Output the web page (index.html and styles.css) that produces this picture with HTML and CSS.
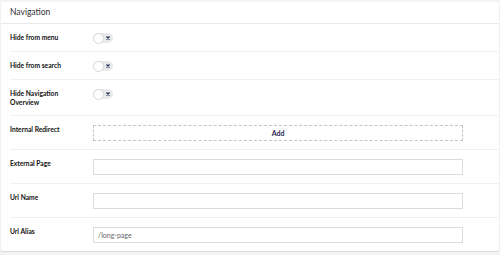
FILE: index.html
```html
<!DOCTYPE html>
<html>
  <head>
    <meta charset="utf-8">
    <title>Navigation</title>
    <link rel="stylesheet" href="styles.css">
  </head>
  <body>
    <div class="panel">
      <div class="panel-header">Navigation</div>

      <div class="row">
        <div class="label">Hide from menu</div>
        <div class="control">
          <span class="toggle"><span class="knob"></span>
            <svg class="cross" viewBox="0 0 4 4"><path d="M0.5 0.5 L3.5 3.5 M3.5 0.5 L0.5 3.5"/></svg>
          </span>
        </div>
      </div>

      <div class="row">
        <div class="label">Hide from search</div>
        <div class="control">
          <span class="toggle"><span class="knob"></span>
            <svg class="cross" viewBox="0 0 4 4"><path d="M0.5 0.5 L3.5 3.5 M3.5 0.5 L0.5 3.5"/></svg>
          </span>
        </div>
      </div>

      <div class="row">
        <div class="label">Hide Navigation<br>Overview</div>
        <div class="control">
          <span class="toggle"><span class="knob"></span>
            <svg class="cross" viewBox="0 0 4 4"><path d="M0.5 0.5 L3.5 3.5 M3.5 0.5 L0.5 3.5"/></svg>
          </span>
        </div>
      </div>

      <div class="row">
        <div class="label">Internal Redirect</div>
        <div class="control">
          <div class="add-btn">Add</div>
        </div>
      </div>

      <div class="row">
        <div class="label">External Page</div>
        <div class="control"><div class="input"></div></div>
      </div>

      <div class="row">
        <div class="label">Url Name</div>
        <div class="control"><div class="input"></div></div>
      </div>

      <div class="row last">
        <div class="label">Url Alias</div>
        <div class="control"><div class="input">/long-page</div></div>
      </div>
    </div>
  </body>
</html>
```

FILE: styles.css
```css
body {
  margin: 0;
  padding: 2px 1px 2px 1px;
  background-color: #f3f3f5;
  font-family: Lato, "Open Sans", sans-serif;
  color: #1b1b1d;
}

.panel {
  background: #fff;
  border-radius: 2px;
  box-shadow: 0 1px 1px rgba(0, 0, 0, 0.1);
}

.panel-header {
  height: 21px;
  line-height: 20px;
  padding: 0 9px;
  font-size: 8.5px;
  color: #303033;
  border-bottom: 1px solid #e9e9eb;
}

.row {
  display: flex;
  margin-left: 9px;
  padding: 9px 0 8px 0;
  border-bottom: 1px solid #f0f0f2;
}

.row:first-of-type {
  padding-top: 10px;
}

.row.last {
  border-bottom: none;
}

.label {
  width: 83px;
  flex: none;
  font-size: 6.7px;
  font-weight: bold;
  line-height: 9px;
  color: #111;
}

.control {
  width: 370px;
}

.toggle {
  display: block;
  position: relative;
  width: 20px;
  height: 10px;
  border-radius: 5px;
  background: #e9e9ec;
}

.knob {
  position: absolute;
  left: 0;
  top: 0;
  width: 9px;
  height: 9px;
  border: 0.5px solid #d8d8dc;
  border-radius: 50%;
  background: #fff;
}

.cross {
  position: absolute;
  left: 12.5px;
  top: 3px;
  width: 4px;
  height: 4px;
  stroke: #1b264f;
  stroke-width: 1.1;
  fill: none;
}

.add-btn {
  height: 14px;
  line-height: 14px;
  border: 1px dashed #c4c4c9;
  text-align: center;
  font-size: 7px;
  font-weight: bold;
  color: #1b264f;
}

.input {
  height: 14px;
  line-height: 14px;
  border: 1px solid #dcdce0;
  padding: 0 4px;
  font-size: 7px;
  color: #68676b;
}
```
